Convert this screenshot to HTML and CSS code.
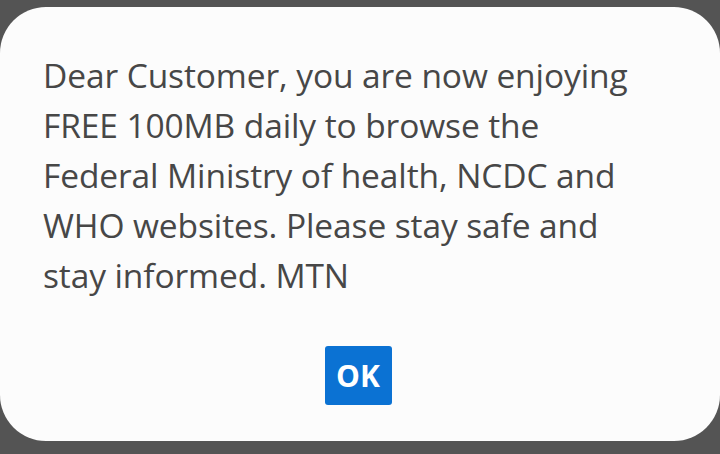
FILE: index.html
```html
<!DOCTYPE html>
<html>
<head>
<meta charset="utf-8">
<link rel="stylesheet" href="styles.css">
</head>
<body>
<div class="dialog">
  <p class="message">Dear Customer, you are now enjoying FREE 100MB daily to browse the Federal Ministry of health, NCDC and WHO websites. Please stay safe and stay informed. MTN</p>
  <div class="actions"><button class="ok">OK</button></div>
</div>
</body>
</html>
```
FILE: styles.css
```css
html, body {
  margin: 0;
  padding: 0;
  width: 720px;
  height: 454px;
  background: #545454;
  overflow: hidden;
}
body {
  padding-top: 7px;
  box-sizing: border-box;
}
.dialog {
  width: 720px;
  height: 434px;
  background: #fcfcfc;
  border-radius: 46px;
  box-sizing: border-box;
  padding: 43px 43px 0 43px;
}
.message {
  margin: 0;
  font-family: "Open Sans", sans-serif;
  font-weight: 500;
  font-size: 33.5px;
  line-height: 50px;
  color: #474747;
  width: 600px;
  letter-spacing: -0.1px;
}
.actions {
  display: flex;
  justify-content: center;
  margin-top: 46px;
  padding-right: 4px;
}
.ok {
  width: 67px;
  height: 59px;
  background: #0b72d3;
  color: #fff;
  border: none;
  border-radius: 3px;
  font-family: "Open Sans", sans-serif;
  font-weight: 700;
  font-size: 30px;
  padding: 0;
}
```
